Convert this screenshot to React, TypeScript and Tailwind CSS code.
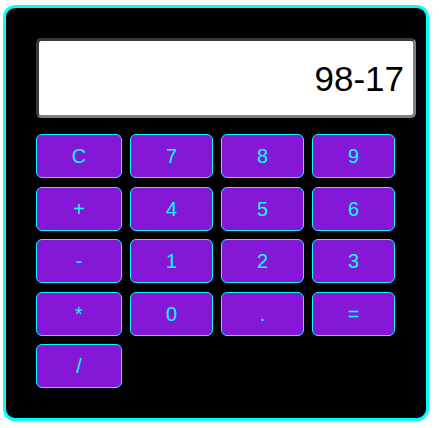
import { useState } from "react";

const KEYS = ["C", "7", "8", "9", "+", "4", "5", "6", "-", "1", "2", "3", "*", "0", ".", "=", "/"];

export default function App() {
  const [value, setValue] = useState("98-17");

  function press(key: string) {
    if (key === "C") return setValue("");
    if (key === "=") {
      try {
        // eslint-disable-next-line no-new-func
        setValue(String(Function(`return (${value})`)()));
      } catch {
        setValue("Error");
      }
      return;
    }
    setValue((v) => v + key);
  }

  return (
    <div className="bg-white min-h-screen pt-[5px] pl-[3px] font-['Liberation_Sans',Arial,sans-serif]">
      <div className="w-[426px] h-[416px] rounded-[12px] border-[3px] border-[#00ffff] bg-black pt-[30px] pl-[30px]">
        <div className="w-[380px] h-[80px] rounded-[5px] border-[3px] border-t-[#3a3a3a] border-l-[#3a3a3a] border-b-[#808080] border-r-[#808080] bg-white flex items-center justify-end pr-[9px]">
          <span className="text-[35px] text-black leading-none">{value}</span>
        </div>
        <div className="mt-[16px] grid grid-cols-[86px_83px_83px_83px] gap-x-[8px] gap-y-[8.5px]">
          {KEYS.map((k) => (
            <button
              key={k}
              onClick={() => press(k)}
              className="h-[44px] rounded-[6px] border border-[#00ffff] bg-[#8517d6] text-[20px] text-[#00ffff] flex items-center justify-center"
            >
              {k}
            </button>
          ))}
        </div>
      </div>
    </div>
  );
}
